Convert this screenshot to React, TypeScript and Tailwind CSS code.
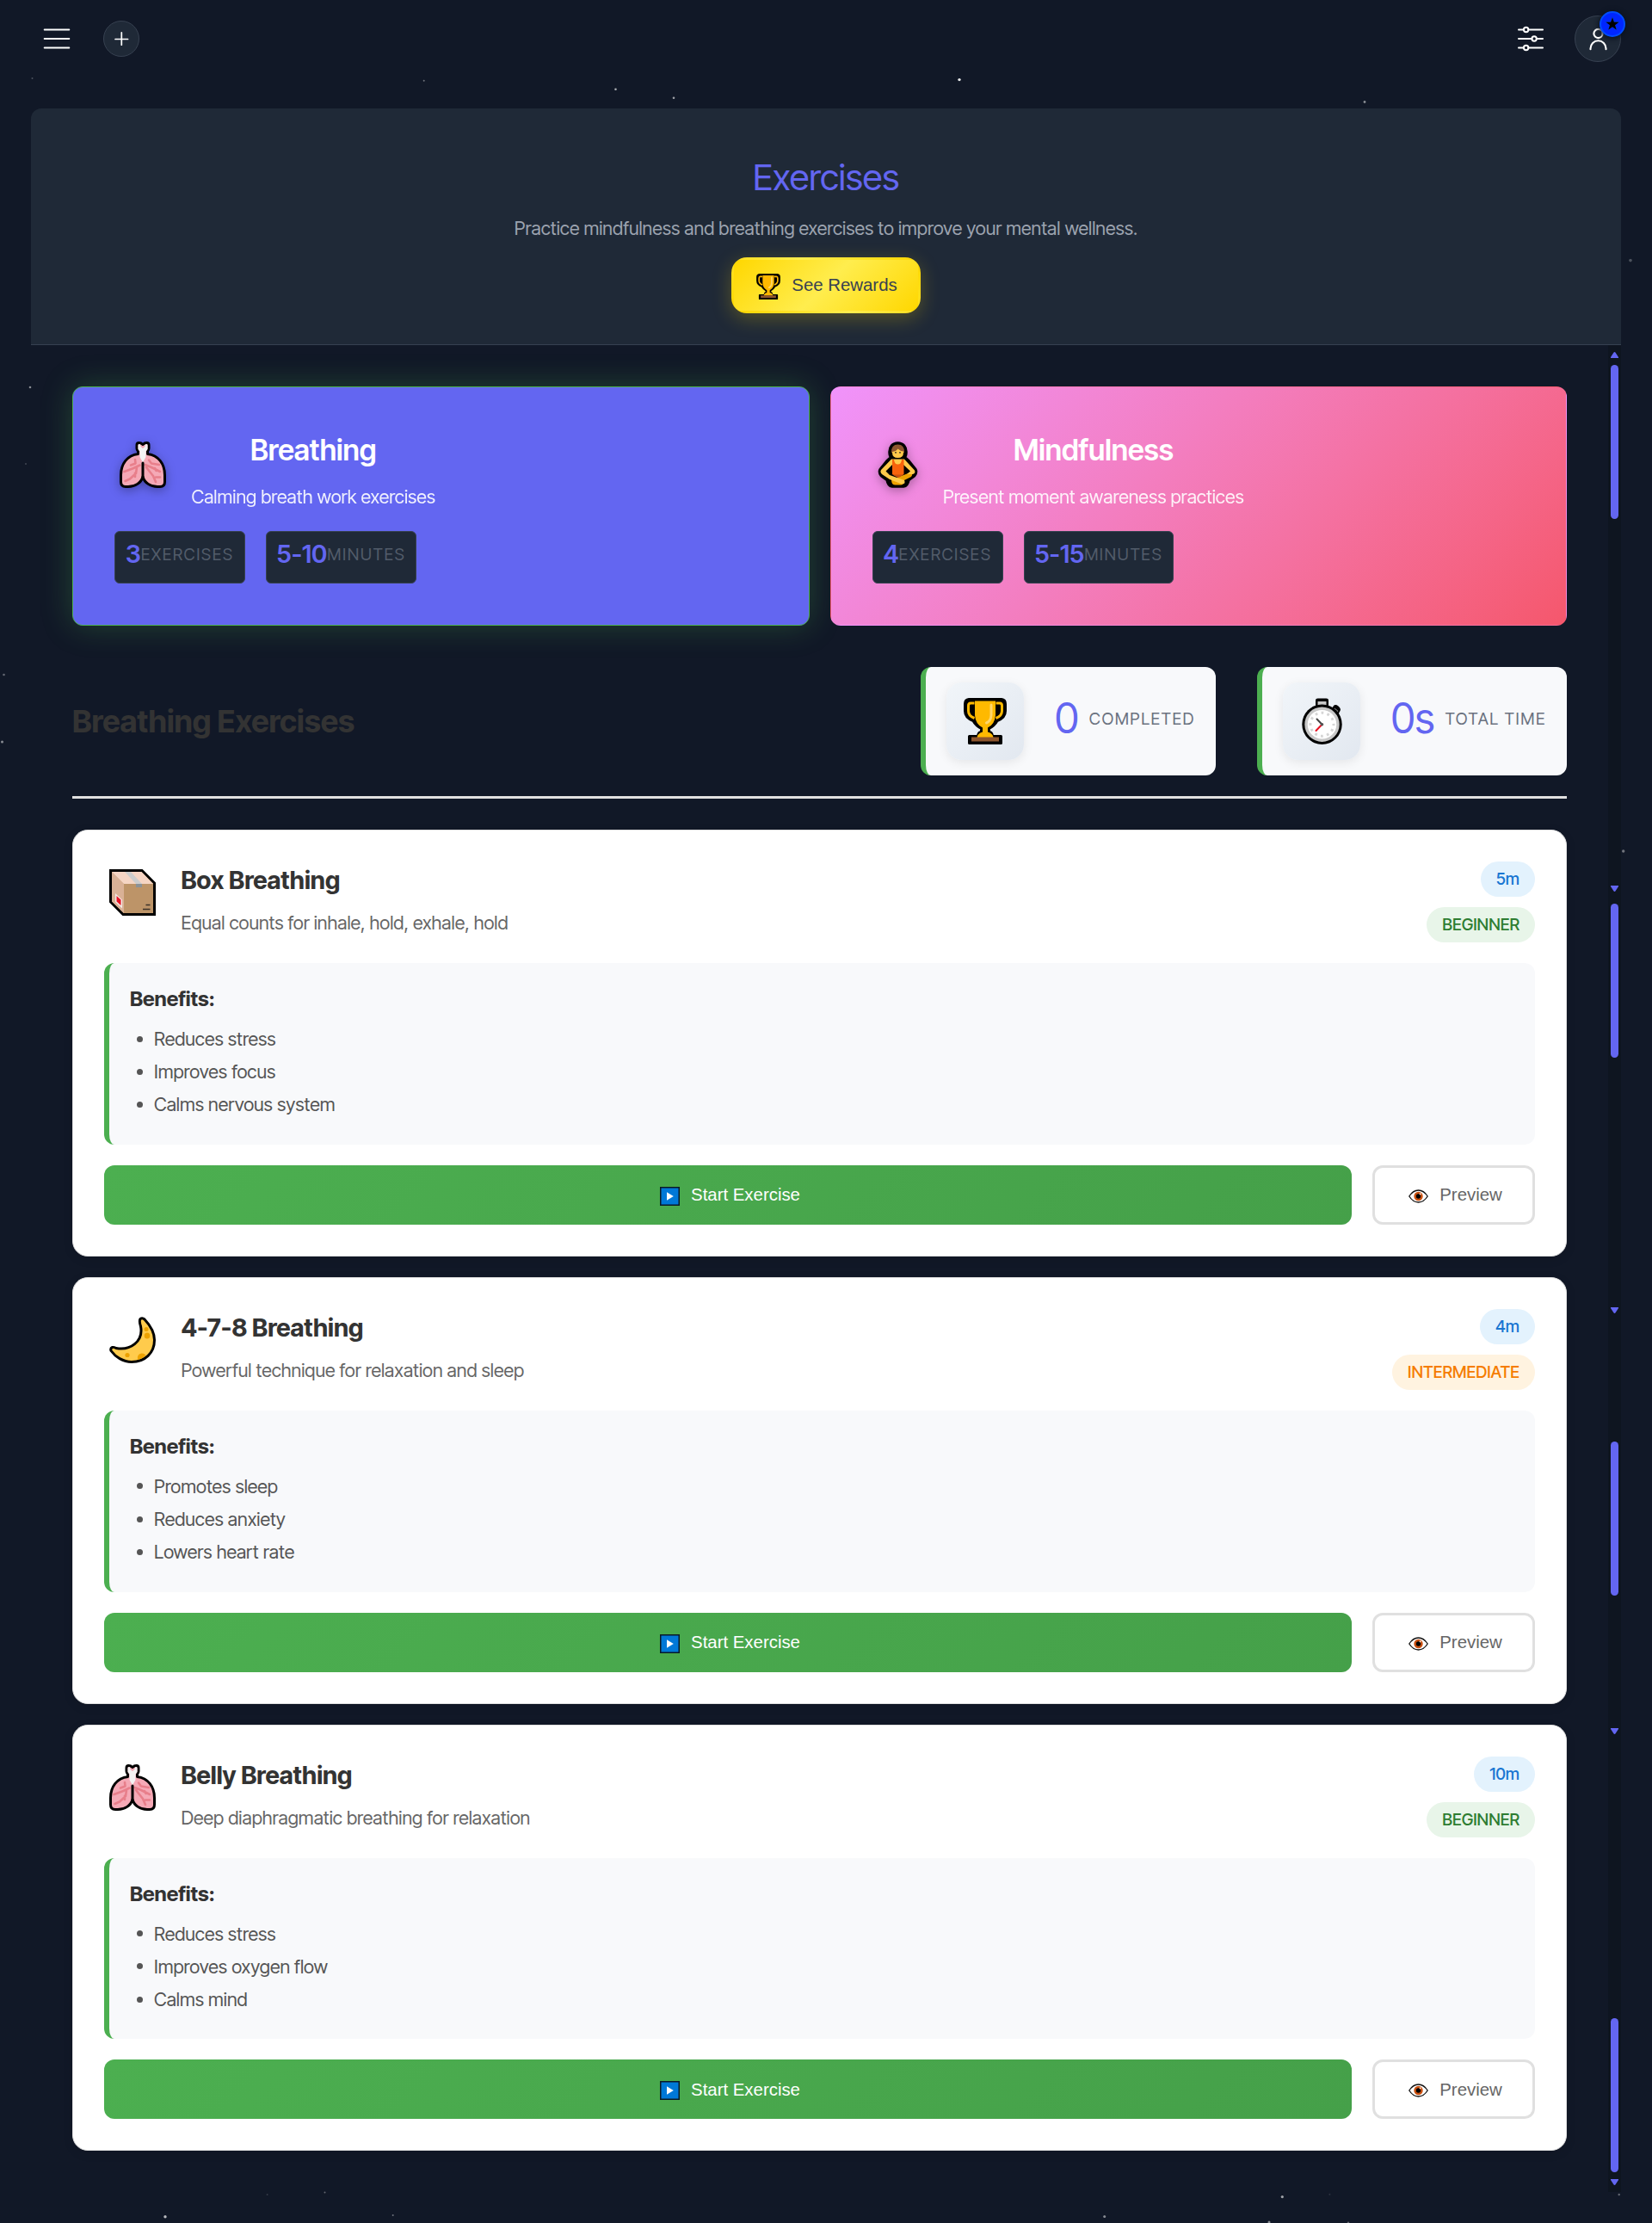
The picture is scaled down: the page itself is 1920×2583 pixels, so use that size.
import type { ReactNode } from "react";

type IconProps = { className?: string };

function Lungs({ className }: IconProps) {
  return (
    <svg viewBox="0 0 54 54" className={className} fill="none" strokeLinecap="round" strokeLinejoin="round">
      <path
        d="M20 4Q20 1.500 22.500 1.500Q25 1.500 27 3.500Q29 1.500 31.500 1.500Q34 1.500 34 4V8Q34 10 32.500 11.500V14.500C45 16 52.500 26 52.500 39V47Q52.500 52.500 47 52.500H44C36 52.500 29 48 27 41C25 48 18 52.500 10 52.500H7Q1.500 52.500 1.500 47V39C1.500 26 9 16 21.500 14.500V11.500Q20 10 20 8Z"
        fill="#f5a9b6"
        stroke="#000"
        strokeWidth="3"
      />
      <path d="M21.500 4.500Q21.500 3 23 3Q24.500 3 24.500 6L27 8L29.500 6Q29.500 3 31 3Q32.500 3 32.500 4.500V9L30.500 11.500V18L27 24.500L23.500 18V11.500L21.500 9Z" fill="#f3f3f3" />
      <path
        d="M18 21L18.500 25.500L13 27.500M23.500 27.500L15 31.500L5.500 35M20 30L19 37L12 43.500L6.500 46M18 36.500V41M34 21.500L37 25.500L46 27M29.500 27L37 30L47 35M31 30L39 40L42 47M42 41.500H47M41 31L42.500 34"
        stroke="#e87f8b"
        strokeWidth="2.6"
      />
      <path d="M27 25V42" stroke="#000" strokeWidth="3" />
    </svg>
  );
}

function Meditation({ className }: IconProps) {
  return (
    <svg viewBox="0 0 47 54" className={className} fill="none" strokeLinejoin="round">
      <path
        d="M23.500 3C18 3 15 7 15 12Q15 16.500 17 18.500L12 23L4 33Q2.500 35.500 5 39L12 44Q13 50.500 17 51H30Q34 50.500 35 44L42 39Q44.500 35.500 43 33L35 23L30 18.500Q32 16.500 32 12C32 7 29 3 23.500 3Z"
        fill="#000"
        stroke="#000"
        strokeWidth="5.5"
      />
      <path d="M17 44L38 36Q42 37 39 41L31 45Q30 50.500 27 50.500H20Q16 50.500 16 44Z" fill="#eda200" />
      <path d="M16 20.500H31L43 33.500Q44.500 36.500 41 38L34 38L38 34.500L30 27V30H17V27L9.500 34.500L14 39L31 45Q33 49.500 28 49.500L14 44L5 38Q2.500 35.500 4 33Z" fill="#ffca4a" />
      <path d="M17 21H19Q19.500 26.500 23.500 26.500Q27.500 26.500 28 21H30.500V38L24 42L17 38Z" fill="#f7630c" />
      <path d="M17 38.500H30.500L24 42Z" fill="#ca5010" />
      <path d="M16 13Q15.500 3.500 23.500 3.500Q31.500 3.500 31 13Z" fill="#8e562e" />
      <path d="M17 12Q21.500 11.500 23.500 8.500Q26 11 30 11.500V13Q30 19 23.500 19Q17 19 17 13Z" fill="#ffc84a" />
      <circle cx="21" cy="12.800" r=".9" fill="#222" />
      <circle cx="26" cy="12.800" r=".9" fill="#222" />
    </svg>
  );
}

function Trophy({ className }: IconProps) {
  return (
    <svg viewBox="0 0 50 54" className={className} fill="none" strokeLinejoin="round">
      <path
        d="M6 1.500H44Q48.500 2 48.500 7V15Q48.500 23 39 26.500Q36 32 29.500 35.500V39Q33 40 33.500 44.500H43.500V52.500H6.500V44.500H16.500Q17 40 20.500 39V35.500Q14 32 11 26.500Q1.500 23 1.500 15V7Q1.500 2 6 1.500Z"
        fill="#000"
        stroke="#000"
        strokeWidth="3"
      />
      <path d="M12.500 6H8Q5.500 6 5.500 9V15Q5.500 21 12.500 23.500M37.500 6H42Q44.500 6 44.500 9V15Q44.500 21 37.500 23.500" stroke="#ffb900" strokeWidth="3" />
      <path d="M13 3.500H37V20Q36 31 28 34.500V39.500Q34 41 34.500 46H15.500Q16 41 22 39.500V34.500Q14 31 13 20Z" fill="#ffb900" />
      <path d="M32 8V20Q31.500 27 26.500 29" stroke="#ffd76a" strokeWidth="3" strokeLinecap="round" />
      <path d="M9 45.500H41V50.500H9Z" fill="#8e562e" />
    </svg>
  );
}

function Stopwatch({ className }: IconProps) {
  return (
    <svg viewBox="0 0 47 54" className={className} fill="none">
      <path d="M16 2.500Q16 .5 18.500 .5H28.500Q31 .5 31 2.500V10H16Z" fill="#000" />
      <path d="M34.500 13L37 9Q39 7 42.500 9.500Q46 12.500 44.500 15L42 19.500Z" fill="#000" />
      <path d="M18.500 4H28.500V10H18.500Z" fill="#c8c8c8" />
      <path d="M38 11.500L42.500 15L41 17L37 14Z" fill="#777" />
      <circle cx="23.500" cy="30.700" r="23.200" fill="#000" />
      <circle cx="23.500" cy="30.700" r="20.200" fill="#c8c8c8" />
      <circle cx="23.500" cy="30.700" r="16.800" fill="#fff" />
      <circle cx="23.500" cy="30.700" r="13.500" stroke="#d5d5d5" strokeWidth="3" strokeDasharray="2.8 4.27" strokeDashoffset="1.4" />
      <path d="M23.500 30.700L17.500 24.500" stroke="#444" strokeWidth="2" strokeLinecap="round" />
      <path d="M23.500 30.700L16.500 38" stroke="#e81224" strokeWidth="2" strokeLinecap="round" />
      <circle cx="23.500" cy="30.700" r="1.8" fill="#555" />
    </svg>
  );
}

function Parcel({ className }: IconProps) {
  return (
    <svg viewBox="0 0 54 54" className={className} fill="none">
      <path d="M1.500 1.500H38L52.500 16V52.500H16L1.500 38Z" fill="#bd9468" stroke="#000" strokeWidth="3" />
      <path d="M3 3L17 17V51L3 37.500Z" fill="#d9b196" />
      <path d="M3 3H37.500L51 17H17Z" fill="#f5d5c4" />
      <path d="M18 3H25L38 17H31Z" fill="#cccccc" />
      <path d="M31 17H38V21H31Z" fill="#8c9296" />
      <path d="M7 28L15 35.500V45.500L7 38Z" fill="#f2e8e4" />
      <path d="M8.500 31L13.500 35.500V42L8.500 37.500Z" fill="#e81224" />
      <path d="M42.500 41.500H47.500M39 46.500H47.500" stroke="#3b3128" strokeWidth="1.6" />
    </svg>
  );
}

function Moon({ className }: IconProps) {
  return (
    <svg viewBox="0 0 54 54" className={className} fill="none">
      <path
        d="M36 2.500Q38.500 .8 41 3C48 10.500 52.500 18 52.500 27C52.500 42 41.500 52.500 26 52.500C16 52.500 7 46.500 2 39.500Q1 36.500 3.500 35.500Q5 35 8 36.500C24 39.500 40 29 36.500 11Q34.500 5 36 2.500Z"
        fill="#ffcb4c"
        stroke="#000"
        strokeWidth="3"
        strokeLinejoin="round"
      />
      <ellipse cx="43" cy="14.500" rx="2.500" ry="2.500" fill="#eda200" />
      <ellipse cx="44" cy="22" rx="3.300" ry="3.500" fill="#eda200" />
      <ellipse cx="21" cy="44.500" rx="2.600" ry="2.600" fill="#eda200" />
      <path d="M33 50Q32 43 37.500 42.500Q42 42.500 42 45Q38.500 49 33 50Z" fill="#eda200" />
    </svg>
  );
}

function Eye({ className }: IconProps) {
  return (
    <svg viewBox="0 0 23 16" className={className}>
      <path d="M.8 8C4 3 7.500 1 11.500 1S19 3 22.200 8C19 13 15.500 15 11.500 15S4 13 .8 8Z" fill="#fff" stroke="#111" strokeWidth="1.3" />
      <circle cx="11.500" cy="8" r="5.200" fill="#ca5010" />
      <circle cx="11.500" cy="8" r="2.700" fill="#000" />
      <circle cx="13.700" cy="5.300" r="1.100" fill="#fbd7c2" />
    </svg>
  );
}

function Play({ className }: IconProps) {
  return (
    <svg viewBox="0 0 23 22" className={className}>
      <path d="M0 0H23V22H0Z" fill="#0b1a26" />
      <path d="M1.500 1.500H21.500V20.500H1.500Z" fill="#0078d7" />
      <path d="M8 6.200L15.800 11L8 15.800Z" fill="#fff" />
    </svg>
  );
}

const stars = [
  { x: 37.5, y: 91, r: 1, o: 0.25 },
  { x: 492.7, y: 93.7, r: 1, o: 0.4 },
  { x: 715.5, y: 103.7, r: 1.3, o: 0.65 },
  { x: 783, y: 113.8, r: 1.3, o: 0.6 },
  { x: 1115, y: 92.6, r: 1.7, o: 0.9 },
  { x: 1586, y: 118.5, r: 1.4, o: 0.5 },
  { x: 1895, y: 302.6, r: 1.8, o: 0.25 },
  { x: 35, y: 450, r: 1.3, o: 0.5 },
  { x: 30, y: 539, r: 1, o: 0.2 },
  { x: 4.5, y: 784, r: 1.3, o: 0.35 },
  { x: 2.5, y: 862, r: 1.5, o: 0.5 },
  { x: 1886.7, y: 989, r: 1.7, o: 0.4 },
  { x: 310.6, y: 2550, r: 1, o: 0.15 },
  { x: 377.5, y: 2547.4, r: 1, o: 0.35 },
  { x: 192, y: 2575.7, r: 1.7, o: 0.7 },
  { x: 456.7, y: 2574, r: 1, o: 0.4 },
  { x: 1490.3, y: 2552.6, r: 1.6, o: 0.6 },
  { x: 1545.4, y: 2549.7, r: 1, o: 0.12 },
  { x: 1283.7, y: 2575.6, r: 1.5, o: 0.5 },
  { x: 1475, y: 2582, r: 1.5, o: 0.5 },
  { x: 1567, y: 2582.6, r: 1.2, o: 0.35 },
  { x: 1881.7, y: 2550, r: 1.2, o: 0.35 },
];

function Starfield() {
  return (
    <svg className="pointer-events-none absolute inset-0 h-full w-full" viewBox="0 0 1920 2583">
      {stars.map((s) => (
        <circle key={s.x} cx={s.x} cy={s.y} r={s.r} fill="#fff" opacity={s.o} />
      ))}
    </svg>
  );
}

function TopBar() {
  return (
    <div className="flex h-[90px] items-center pr-9 pl-[45px] text-white">
      <svg viewBox="0 0 42 42" className="size-[42px]" stroke="currentColor" strokeWidth="2" strokeLinecap="round">
        <path d="M6.700 10.500H35.300M6.700 21H35.300M6.700 31.500H35.300" />
      </svg>
      <div className="ml-[33px] flex size-[42px] items-center justify-center rounded-full border border-[#374151] bg-[#1f2937]">
        <svg viewBox="0 0 18 18" className="size-[18px]" stroke="currentColor" strokeWidth="1.7" strokeLinecap="round">
          <path d="M9.300 1.800V16.200M2 9.500H16.600" />
        </svg>
      </div>
      <svg viewBox="0 0 42 42" className="ml-auto size-[42px]" fill="none" stroke="currentColor" strokeWidth="2" strokeLinecap="round">
        <path d="M7 10.500H12.900M18.400 10.500H35M7 21H22.400M27.900 21H35M7 31.500H12.900M18.400 31.500H35" />
        <circle cx="15.650" cy="10.500" r="2.700" />
        <circle cx="25.100" cy="21" r="2.700" />
        <circle cx="15.650" cy="31.500" r="2.700" />
      </svg>
      <div className="relative ml-[30px] flex size-[54px] items-center justify-center rounded-full border border-[#374151] bg-[#1f2937]">
        <svg viewBox="0 0 27 27" className="size-[27px]" fill="none" stroke="currentColor" strokeWidth="2.1" strokeLinecap="round">
          <circle cx="13.500" cy="7" r="5.100" />
          <path d="M4.500 25.200V24.300A9 9 0 0 1 22.500 24.300V25.200" />
        </svg>
        <div className="absolute -top-[6px] -right-[6px] flex size-[30px] items-center justify-center rounded-full border-2 border-[#004dff] bg-[#0026ff] shadow-[0_1px_5px_2px_rgba(10,18,30,0.8)]">
          <svg viewBox="0 0 18 18" className="size-[18px]">
            <path d="M9 0L11 6.200H17.600L12.300 10L14.300 16.300L9 12.500L3.700 16.300L5.700 10L.4 6.200H7Z" fill="#0a3fae" />
            <path d="M9 1.500L10.900 6.800H16.400L12 10.200L13.600 15.500L9 12.300L4.400 15.500L6 10.200L1.600 6.800H7.100Z" fill="#000" />
          </svg>
        </div>
      </div>
    </div>
  );
}

function Stat({ value, label }: { value: string; label: string }) {
  return (
    <div className="flex h-[61px] items-start rounded-[6px] border border-[#374151] bg-[#1f2937] px-3 pt-3 leading-7">
      <span className="text-[28.8px] font-semibold text-[#6366f1]">{value}</span>
      <span className="text-[19.2px] tracking-[1.5px] text-[#525c6a] uppercase">{label}</span>
    </div>
  );
}

type CategoryProps = { className: string; icon: ReactNode; title: string; text: string; count: string; minutes: string };

function Category({ className, icon, title, text, count, minutes }: CategoryProps) {
  return (
    <div className={className}>
      <div className="flex h-24 gap-[29.5px] pl-[6px] text-center text-white">
        <div className="mt-[15px]">{icon}</div>
        <div>
          <h3 className="text-[33.6px] leading-[50px] font-semibold">{title}</h3>
          <p className="mt-3 text-[21.6px] leading-[34px] opacity-90">{text}</p>
        </div>
      </div>
      <div className="mt-[23px] flex gap-6">
        <Stat value={count} label="Exercises" />
        <Stat value={minutes} label="Minutes" />
      </div>
    </div>
  );
}

function Summary({ className, icon, value, label }: { className: string; icon: ReactNode; value: string; label: string }) {
  return (
    <div className={className}>
      <div className="flex size-[90px] items-center justify-center rounded-[18px] bg-linear-135 from-[#f1f5f9] to-[#e2e8f0] shadow-[0_3px_12px_rgba(0,0,0,0.08)]">
        {icon}
      </div>
      <div className="flex items-center gap-3 pb-[6px]">
        <span className="text-[48px] leading-[58px] text-[#6366f1]">{value}</span>
        <span className="text-[19.2px] leading-[30px] tracking-[1.5px] text-[#6b7280] uppercase">{label}</span>
      </div>
    </div>
  );
}

type Exercise = { icon: ReactNode; title: string; text: string; time: string; level: string; levelClass: string; benefits: string[] };

const exercises: Exercise[] = [
  {
    icon: <Parcel className="size-[54px]" />,
    title: "Box Breathing",
    text: "Equal counts for inhale, hold, exhale, hold",
    time: "5m",
    level: "Beginner",
    levelClass: "bg-[#e8f5e9] text-[#2e7d32]",
    benefits: ["Reduces stress", "Improves focus", "Calms nervous system"],
  },
  {
    icon: <Moon className="size-[54px]" />,
    title: "4-7-8 Breathing",
    text: "Powerful technique for relaxation and sleep",
    time: "4m",
    level: "Intermediate",
    levelClass: "bg-[#fff3e0] text-[#f57c00]",
    benefits: ["Promotes sleep", "Reduces anxiety", "Lowers heart rate"],
  },
  {
    icon: <Lungs className="size-[54px]" />,
    title: "Belly Breathing",
    text: "Deep diaphragmatic breathing for relaxation",
    time: "10m",
    level: "Beginner",
    levelClass: "bg-[#e8f5e9] text-[#2e7d32]",
    benefits: ["Reduces stress", "Improves oxygen flow", "Calms mind"],
  },
];

function ExerciseCard({ item }: { item: Exercise }) {
  return (
    <div className="rounded-[18px] border border-[#e0e0e0] bg-white p-9 shadow-[0_3px_12px_rgba(0,0,0,0.1)]">
      <div className="flex h-[94px] pl-[6px]">
        <div className="mt-[9px]">{item.icon}</div>
        <div className="ml-[29.5px]">
          <h3 className="text-[28.8px] leading-[43px] font-bold text-[#333]">{item.title}</h3>
          <p className="mt-[11px] text-[21.6px] leading-[34px] text-[#666]">{item.text}</p>
        </div>
        <div className="ml-auto flex flex-col items-end gap-3 text-[19.2px] leading-[41px] font-medium">
          <span className="rounded-full bg-[#e3f2fd] px-[18px] text-[#1976d2]">{item.time}</span>
          <span className={`rounded-full px-[18px] uppercase ${item.levelClass}`}>{item.level}</span>
        </div>
      </div>
      <div className="mt-6 h-[210.8px] rounded-xl border-l-[6px] border-[#4caf50] bg-[#f8f9fb] pt-6 pl-6">
        <h4 className="text-[24px] leading-9 font-bold text-[#333]">Benefits:</h4>
        <ul className="mt-[9px] text-[21.6px] leading-[38.2px] text-[#555]">
          {item.benefits.map((b) => (
            <li key={b} className="flex items-center gap-[13px] pl-2">
              <span className="size-[7px] rounded-full bg-[#555]" />
              {b}
            </li>
          ))}
        </ul>
      </div>
      <div className="mt-6 flex h-[69px] gap-6 font-['Liberation_Sans',Arial,sans-serif] text-[20.4px] font-medium">
        <button className="flex grow items-center justify-center gap-[13px] rounded-xl bg-linear-135 from-[#4caf50] to-[#45a049] pl-[5px] text-white">
          <Play className="mt-[3px] h-[22px] w-[23px]" />
          <span>Start Exercise</span>
        </button>
        <button className="flex w-[189px] items-center justify-center gap-[13px] rounded-xl border-[3px] border-[#e0e0e0] bg-white pl-1 text-[#666]">
          <Eye className="mt-[3px] h-4 w-[23px]" />
          <span>Preview</span>
        </button>
      </div>
    </div>
  );
}

function Arrow({ className, up }: { className: string; up?: boolean }) {
  return (
    <svg viewBox="0 0 9 7" className={className} fill="#6366f1">
      {up ? <path d="M4.500 0Q5.200 0 5.600 .8L9 6V7H0V6L3.400 .8Q3.800 0 4.500 0Z" /> : <path d="M4.500 7Q5.200 7 5.600 6.200L9 1V0H0V1L3.400 6.200Q3.800 7 4.500 7Z" />}
    </svg>
  );
}

function ScrollTrack() {
  return (
    <div className="flex h-[2146px] w-[15px] shrink-0 flex-col items-center bg-[#0e1520] pt-2">
      <Arrow up className="h-[7px] w-[9px] shrink-0" />
      <div className="mt-2 h-[179px] w-[9px] shrink-0 rounded-full bg-[#6366f1]" />
      <Arrow className="mt-[426px] h-[7px] w-[9px] shrink-0" />
      <div className="mt-[14px] h-[179px] w-[9px] shrink-0 rounded-full bg-[#6366f1]" />
      <Arrow className="mt-[290px] h-[7px] w-[9px] shrink-0" />
      <div className="mt-[149px] h-[179px] w-[9px] shrink-0 rounded-full bg-[#6366f1]" />
      <Arrow className="mt-[154px] h-[7px] w-[9px] shrink-0" />
      <div className="mt-[330px] h-[179px] w-[9px] shrink-0 rounded-full bg-[#6366f1]" />
      <Arrow className="mt-2 h-[7px] w-[9px] shrink-0" />
    </div>
  );
}

export default function App() {
  return (
    <div className="relative h-[2583px] w-full overflow-hidden bg-[#111827] font-['Inter_Tight',Inter,sans-serif]">
      <Starfield />
      <div className="relative">
        <TopBar />
        <main className="mx-9 mt-9">
          <header className="flex h-[275px] flex-col items-center rounded-t-xl border-b border-[#374151] bg-[#1f2937] pt-[55px]">
            <h1 className="text-[42px] leading-[50px] text-[#6366f1]">Exercises</h1>
            <p className="mt-4 text-[21.6px] leading-9 text-[#9ca3af]">
              Practice mindfulness and breathing exercises to improve your mental wellness.
            </p>
            <button className="mt-4 flex h-[65px] w-[220px] items-center justify-center gap-[13px] rounded-[18px] border-[3px] border-transparent bg-linear-[135deg,#ffd700,#ffed4e,#ffd700] pl-[2px] font-['Liberation_Sans',Arial,sans-serif] text-[20.4px] font-medium text-[#374151] shadow-[0_6px_22px_rgba(255,215,0,0.25)]">
              <Trophy className="mt-[2px] h-[30px] w-7" />
              <span>See Rewards</span>
            </button>
          </header>
          <div className="flex">
            <div className="grow p-12">
              <div className="grid grid-cols-2 gap-6">
                <Category
                  className="h-[278px] rounded-xl border border-[#4caf50] bg-[#6366f1] p-12 shadow-[0_0_36px_rgba(76,175,80,0.3)]"
                  icon={<Lungs className="size-[54px] drop-shadow-[0_3px_6px_rgba(0,0,0,0.3)]" />}
                  title="Breathing"
                  text="Calming breath work exercises"
                  count="3"
                  minutes="5-10"
                />
                <Category
                  className="h-[278px] rounded-xl border border-transparent bg-linear-135 from-[#f093fb] to-[#f5576c] p-12"
                  icon={<Meditation className="h-[54px] w-[47px] drop-shadow-[0_3px_6px_rgba(0,0,0,0.3)]" />}
                  title="Mindfulness"
                  text="Present moment awareness practices"
                  count="4"
                  minutes="5-15"
                />
              </div>
              <div className="mt-12 flex items-center gap-12 border-b-[3px] border-[#e0e0e0] pb-6">
                <h2 className="grow text-[36px] leading-[54px] font-bold text-[#333]">Breathing Exercises</h2>
                <Summary
                  className="flex h-[126px] w-[343px] items-center justify-between rounded-xl border-l-[6px] border-[#4caf50] bg-[#f8f9fb] px-6"
                  icon={<Trophy className="h-[54px] w-[50px]" />}
                  value="0"
                  label="Completed"
                />
                <Summary
                  className="flex h-[126px] w-[360px] items-center justify-between rounded-xl border-l-[6px] border-[#4caf50] bg-[#f8f9fb] px-6"
                  icon={<Stopwatch className="h-[54px] w-[47px]" />}
                  value="0s"
                  label="Total Time"
                />
              </div>
              <div className="mt-9 flex flex-col gap-6">
                {exercises.map((item) => (
                  <ExerciseCard key={item.title} item={item} />
                ))}
              </div>
            </div>
            <ScrollTrack />
          </div>
        </main>
      </div>
    </div>
  );
}
